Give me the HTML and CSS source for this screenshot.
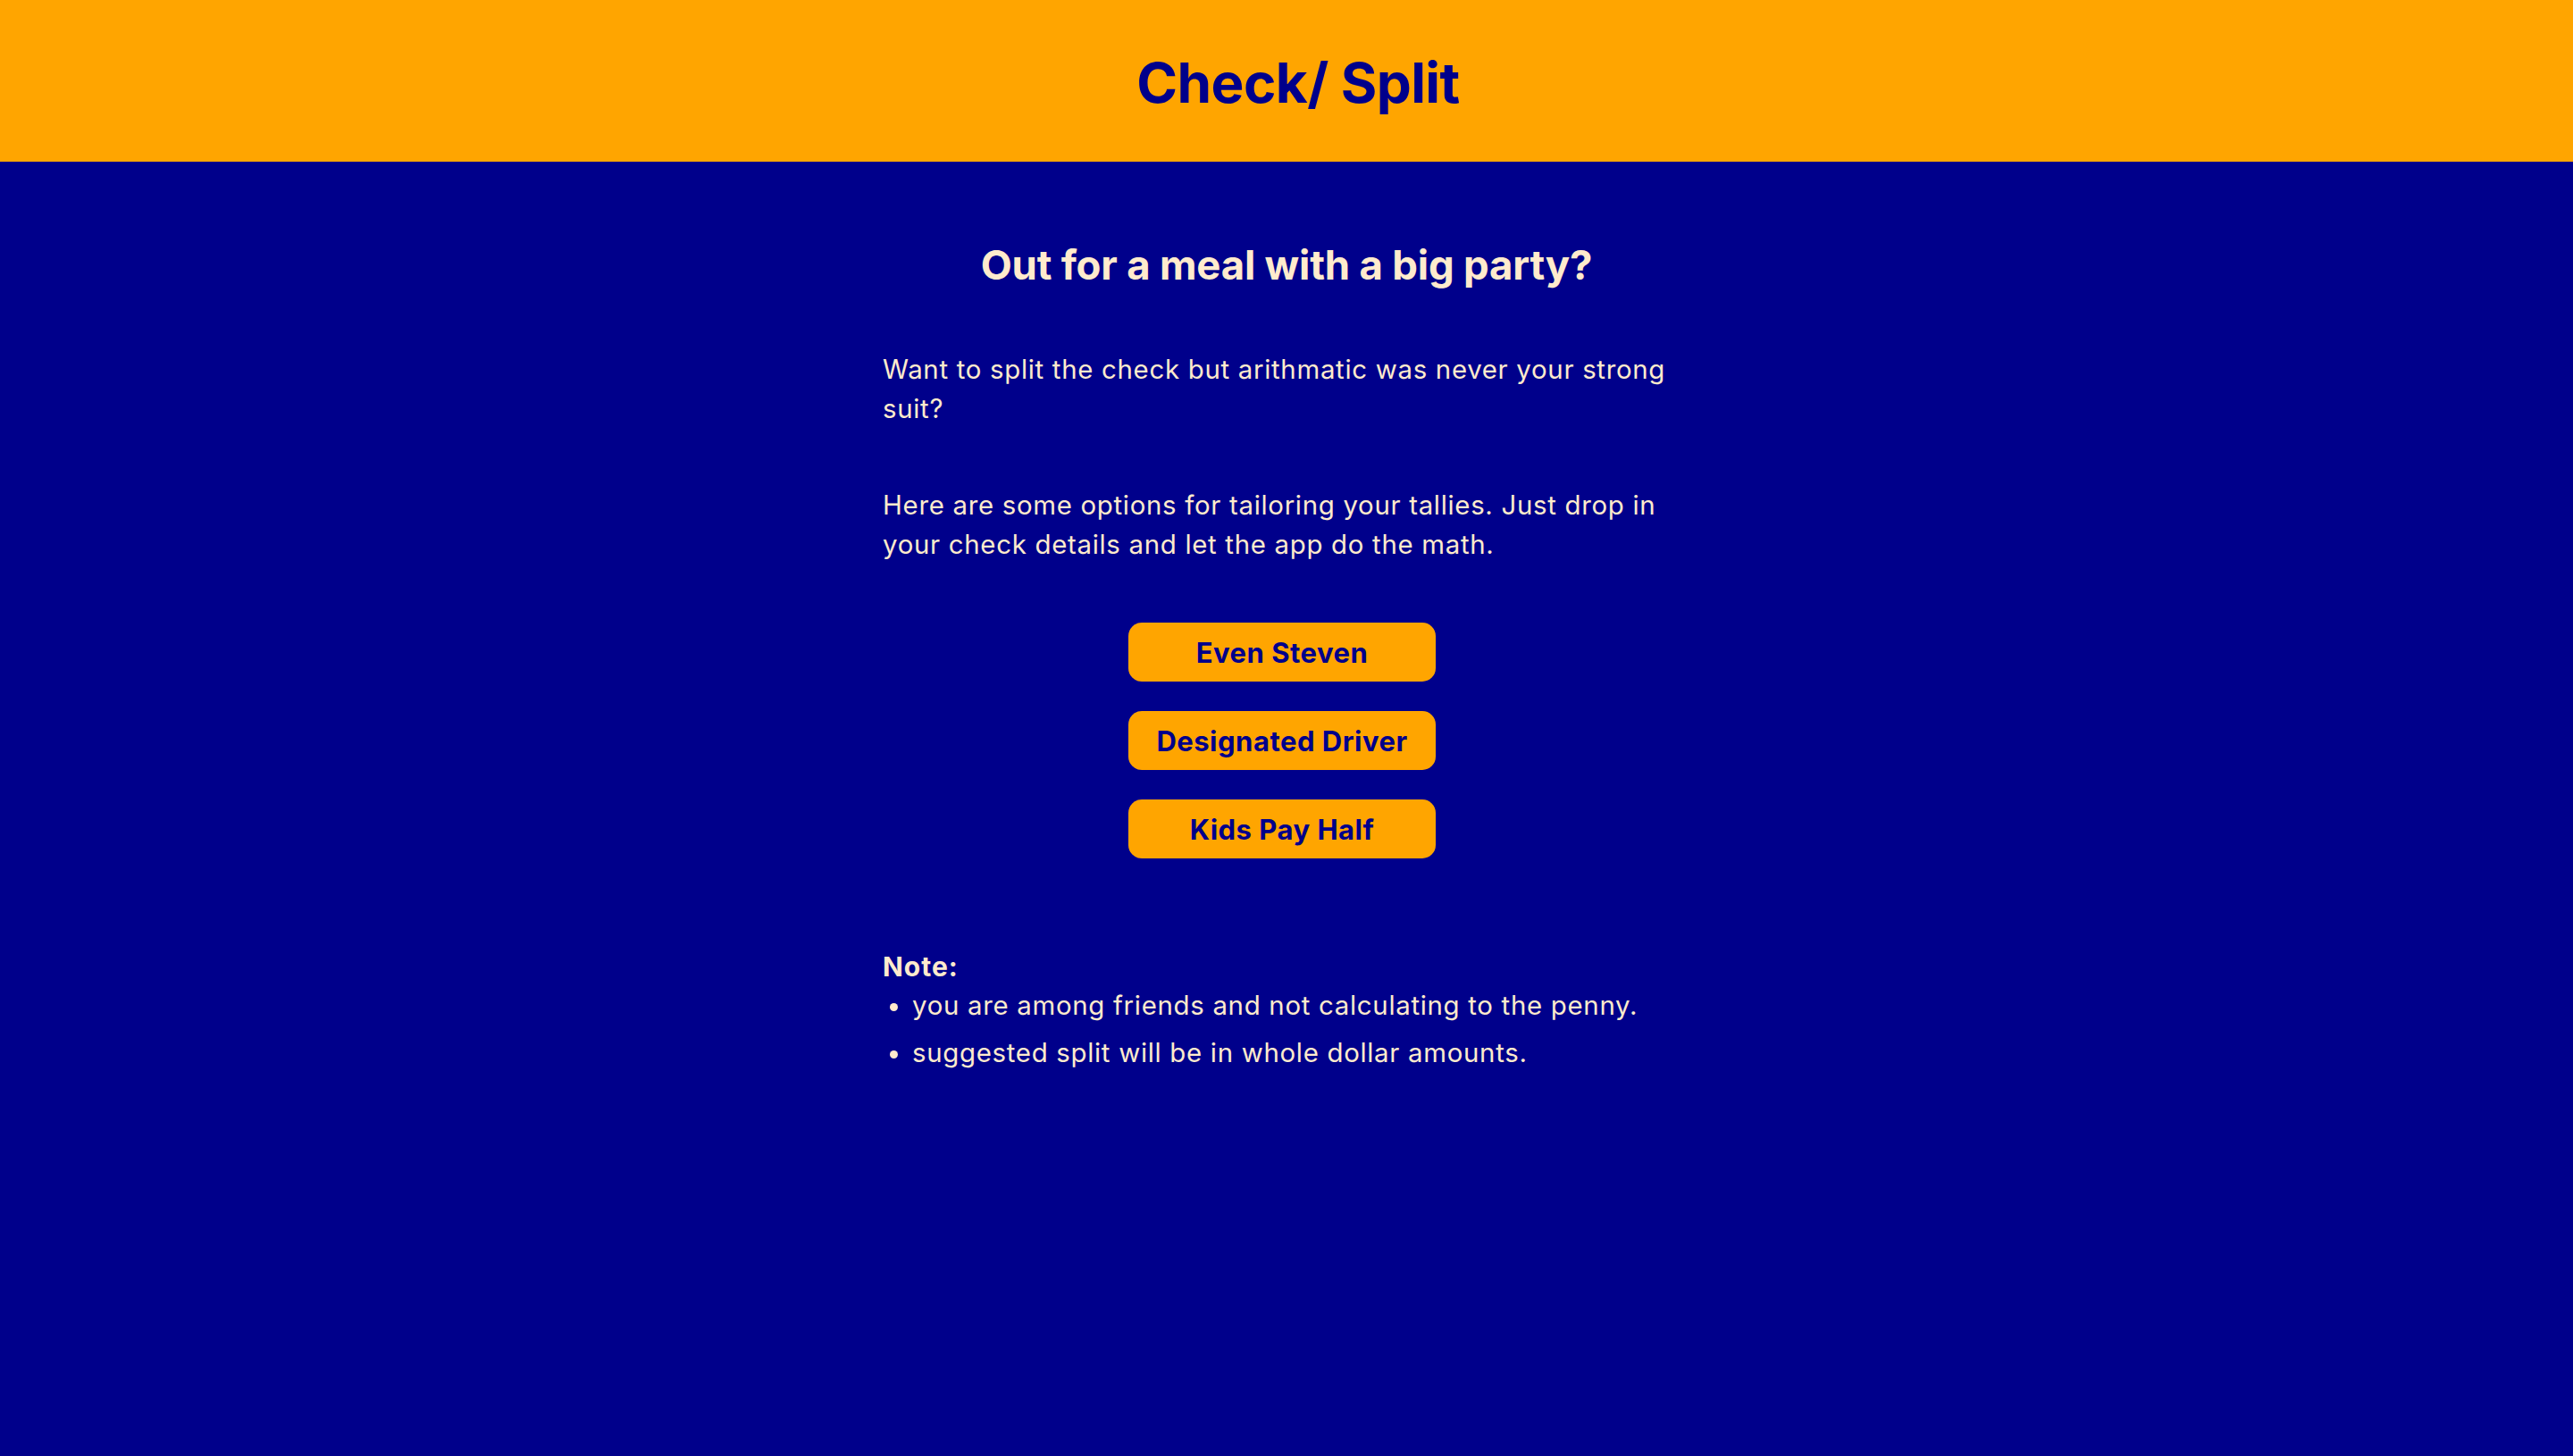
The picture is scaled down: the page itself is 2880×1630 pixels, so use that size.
FILE: index.html
```html
<!DOCTYPE html>
<html lang="en">
<head>
<meta charset="utf-8">
<title>Check/ Split</title>
<link rel="stylesheet" href="styles.css">
</head>
<body>
<header class="topbar">
  <h1 class="brand">Check/ Split</h1>
</header>
<main class="content">
  <h2 class="headline">Out for a meal with a big party?</h2>
  <p class="copy">Want to split the check but arithmatic was never your strong suit?</p>
  <p class="copy">Here are some options for tailoring your tallies. Just drop in your check details and let the app do the math.</p>
  <nav class="options">
    <button class="option">Even Steven</button>
    <button class="option">Designated Driver</button>
    <button class="option">Kids Pay Half</button>
  </nav>
  <section class="note">
    <div class="note-title">Note:</div>
    <ul class="note-list">
      <li>you are among friends and not calculating to the penny.</li>
      <li>suggested split will be in whole dollar amounts.</li>
    </ul>
  </section>
</main>
</body>
</html>
```
FILE: styles.css
```css
* { box-sizing: border-box; }
html, body {
  margin: 0;
  padding: 0;
  height: 100%;
}
body {
  background: #00008b;
  font-family: Inter, "Noto Sans", sans-serif;
  color: #ffebcd;
}
.topbar {
  background: #ffa500;
  height: 181px;
  display: flex;
  align-items: center;
  justify-content: center;
  padding-left: 26px;
}
.brand {
  margin: 0;
  font-size: 62px;
  font-weight: 700;
  color: #00008b;
  line-height: 1;
  letter-spacing: -0.6px;
  transform: translateY(2px);
}
.content {
  width: 904px;
  margin: 0 auto;
  padding-top: 88px;
  display: flex;
  flex-direction: column;
}
.headline {
  margin: 0 0 68px;
  font-size: 45.5px;
  line-height: 55px;
  font-weight: 700;
  letter-spacing: -0.2px;
  text-align: center;
}
.copy {
  margin: 0 0 64px;
  font-size: 29.4px;
  line-height: 44.1px;
  letter-spacing: 0.7px;
}
.copy + .copy { margin-bottom: 65px; }
.options {
  display: flex;
  flex-direction: column;
  align-items: center;
  gap: 33px;
  margin-bottom: 99px;
  padding-right: 10px;
}
.option {
  width: 344px;
  height: 66px;
  border: none;
  border-radius: 15px;
  background: #ffa500;
  color: #00008b;
  font-family: Inter, "Noto Sans", sans-serif;
  font-size: 31px;
  font-weight: 700;
  letter-spacing: 0.5px;
  padding: 0;
  cursor: pointer;
}
.note {
  font-size: 29.4px;
  line-height: 44.1px;
  letter-spacing: 0.7px;
}
.note-title {
  font-weight: 700;
  font-size: 30px;
  letter-spacing: 1px;
}
.note-list {
  margin: 0;
  padding-left: 33px;
}
.note-list li + li { margin-top: 8px; }
```
